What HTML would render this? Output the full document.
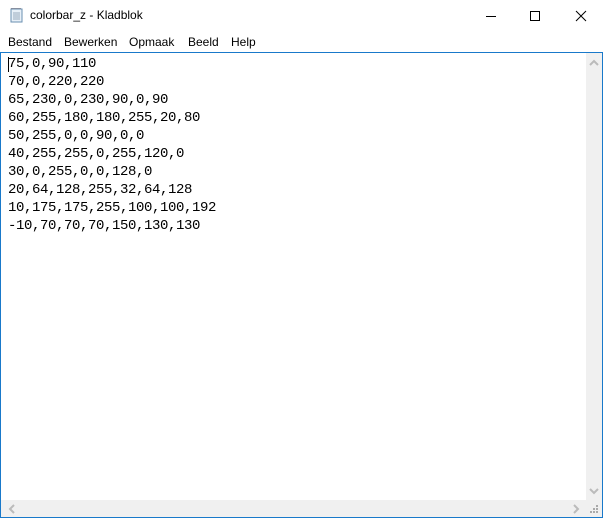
<!DOCTYPE html><html><head><style>
body{margin:0;width:603px;height:518px;position:relative;background:#fff;font-family:"Liberation Sans",sans-serif;overflow:hidden}
.title{position:absolute;left:0;top:0;width:603px;height:30px;background:#fff}
.title span{position:absolute;left:30px;top:8px;font-size:12px;color:#000}
.menu{position:absolute;left:0;top:30px;height:22px;width:603px;font-size:12px}
.menu span{position:absolute;top:5px}
.line{position:absolute;left:0;top:52px;width:603px;height:1px;background:#1979ca}
.bl{position:absolute;left:0;top:52px;width:1px;height:466px;background:#1979ca}
.br{position:absolute;right:0;top:52px;width:1px;height:466px;background:#1979ca}
.bb{position:absolute;left:0;bottom:0;width:603px;height:1px;background:#1979ca}
pre{position:absolute;left:8px;top:55px;margin:0;font-family:"Liberation Mono",monospace;font-size:14px;letter-spacing:-0.4px;line-height:18px;color:#000}
.vs{position:absolute;left:586px;top:53px;width:16px;height:447px;background:#f0f0f0}
.hs{position:absolute;left:1px;top:500px;width:601px;height:17px;background:#f0f0f0}
</style></head><body>
<div class="title">
<svg style="position:absolute;left:9px;top:7px" width="16" height="16"><rect x="2" y="2" width="11" height="13" fill="#e8f0f8" stroke="#6a8fb0"/><path d="M4 6h7M4 8h7M4 10h7M4 12h7" stroke="#9ab"/><path d="M3 2v-1M5 2v-1M7 2v-1M9 2v-1M11 2v-1" stroke="#556"/></svg>
<span>colorbar_z - Kladblok</span>
<svg style="position:absolute;left:485px;top:10px" width="14" height="14"><path d="M1 6.5h10" stroke="#000"/></svg>
<svg style="position:absolute;left:529px;top:10px" width="14" height="14"><rect x="1.5" y="1.5" width="9" height="9" fill="none" stroke="#000"/></svg>
<svg style="position:absolute;left:575px;top:10px" width="14" height="14"><path d="M1 1l10 10M11 1l-10 10" stroke="#000"/></svg>
</div>
<div class="menu"><span style="left:8px">Bestand</span><span style="left:64px">Bewerken</span><span style="left:129px">Opmaak</span><span style="left:188px">Beeld</span><span style="left:231px">Help</span></div>
<div class="line"></div><div class="bl"></div><div class="br"></div><div class="bb"></div>
<div style="position:absolute;left:8px;top:57px;width:1px;height:15px;background:#000"></div>
<pre>75,0,90,110
70,0,220,220
65,230,0,230,90,0,90
60,255,180,180,255,20,80
50,255,0,0,90,0,0
40,255,255,0,255,120,0
30,0,255,0,0,128,0
20,64,128,255,32,64,128
10,175,175,255,100,100,192
-10,70,70,70,150,130,130</pre>
<div class="vs"></div><div class="hs"></div>
<svg style="position:absolute;left:588px;top:58px" width="12" height="10"><path d="M2 7l4-4 4 4" stroke="#bbb" stroke-width="2" fill="none"/></svg>
<svg style="position:absolute;left:588px;top:486px" width="12" height="10"><path d="M2 3l4 4 4-4" stroke="#bbb" stroke-width="2" fill="none"/></svg>
<svg style="position:absolute;left:7px;top:503px" width="10" height="12"><path d="M7 2l-4 4 4 4" stroke="#bbb" stroke-width="2" fill="none"/></svg>
<svg style="position:absolute;left:571px;top:503px" width="10" height="12"><path d="M3 2l4 4-4 4" stroke="#bbb" stroke-width="2" fill="none"/></svg>
<svg style="position:absolute;left:588px;top:503px" width="12" height="12"><g fill="#aaa"><rect x="8" y="2" width="2" height="2"/><rect x="5" y="5" width="2" height="2"/><rect x="8" y="5" width="2" height="2"/><rect x="2" y="8" width="2" height="2"/><rect x="5" y="8" width="2" height="2"/><rect x="8" y="8" width="2" height="2"/></g></svg>
</body></html>
